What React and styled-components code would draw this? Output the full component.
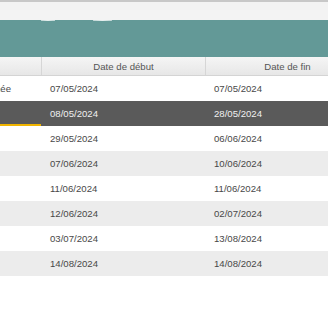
import React from "react";
import styled, { createGlobalStyle } from "styled-components";

const Global = createGlobalStyle`
  html, body { margin: 0; padding: 0; background: #ffffff; overflow: hidden; }
  body { font-family: "Liberation Sans", Arial, sans-serif; }
`;

const Page = styled.div`
  width: 328px;
  height: 320px;
  overflow: hidden;
  display: flex;
  flex-direction: column;
`;

const TopStrip = styled.div`
  height: 18px;
  border-top: 2px solid #c8c8c8;
  background: #f3f3f3;
  flex-shrink: 0;
`;

const Banner = styled.div`
  height: 37px;
  background: #639997;
  flex-shrink: 0;
  display: flex;
  align-items: flex-start;
  padding-left: 41px;
  gap: 38px;
`;

const GlyphTail = styled.span`
  display: block;
  width: ${(p) => p.$w}px;
  height: 1px;
  background: rgba(255, 255, 255, 0.85);
  border-radius: 0 0 50% 50%;
`;

const Table = styled.div`
  width: 369px;
  display: flex;
  flex-direction: column;
`;

const HeaderRow = styled.div`
  display: grid;
  grid-template-columns: 41px 164px 164px;
  height: 18px;
  background: linear-gradient(#f5f5f5, #e7e7e7);
  border-bottom: 1px solid #d4d4d4;
`;

const HeaderCell = styled.div`
  display: flex;
  align-items: center;
  justify-content: center;
  font-size: 9.6px;
  color: #555555;
  border-left: ${(p) => (p.$first ? "none" : "1px solid #d6d6d6")};
  white-space: nowrap;
  overflow: hidden;
`;

const Row = styled.div`
  display: grid;
  grid-template-columns: 41px 164px 164px;
  height: 25px;
  background: ${(p) => (p.$selected ? "#5a5a5a" : p.$alt ? "#ececec" : "#ffffff")};
  color: ${(p) => (p.$selected ? "#f0f0f0" : "#484848")};
`;

const NameCell = styled.div`
  display: flex;
  align-items: center;
  justify-content: flex-end;
  padding-right: 30px;
  overflow: hidden;
  white-space: nowrap;
  font-size: 9.6px;
  box-shadow: ${(p) => (p.$selected ? "inset 0 -2px 0 #f0b400" : "none")};
`;

const Cell = styled.div`
  display: flex;
  align-items: center;
  padding-left: 9px;
  font-size: 9.6px;
  white-space: nowrap;
`;

const rows = [
  ["Journée", "07/05/2024", "07/05/2024"],
  ["", "08/05/2024", "28/05/2024"],
  ["", "29/05/2024", "06/06/2024"],
  ["", "07/06/2024", "10/06/2024"],
  ["", "11/06/2024", "11/06/2024"],
  ["", "12/06/2024", "02/07/2024"],
  ["", "03/07/2024", "13/08/2024"],
  ["", "14/08/2024", "14/08/2024"],
];

export default function App() {
  return (
    <>
      <Global />
      <Page>
        <TopStrip />
        <Banner>
          <GlyphTail $w={14} />
          <GlyphTail $w={19} />
        </Banner>
        <Table>
          <HeaderRow>
            <HeaderCell $first />
            <HeaderCell>Date de début</HeaderCell>
            <HeaderCell>Date de fin</HeaderCell>
          </HeaderRow>
          {rows.map((r, i) => (
            <Row key={i} $selected={i === 1} $alt={i % 2 === 1}>
              <NameCell $selected={i === 1}>{r[0]}</NameCell>
              <Cell>{r[1]}</Cell>
              <Cell>{r[2]}</Cell>
            </Row>
          ))}
        </Table>
      </Page>
    </>
  );
}
